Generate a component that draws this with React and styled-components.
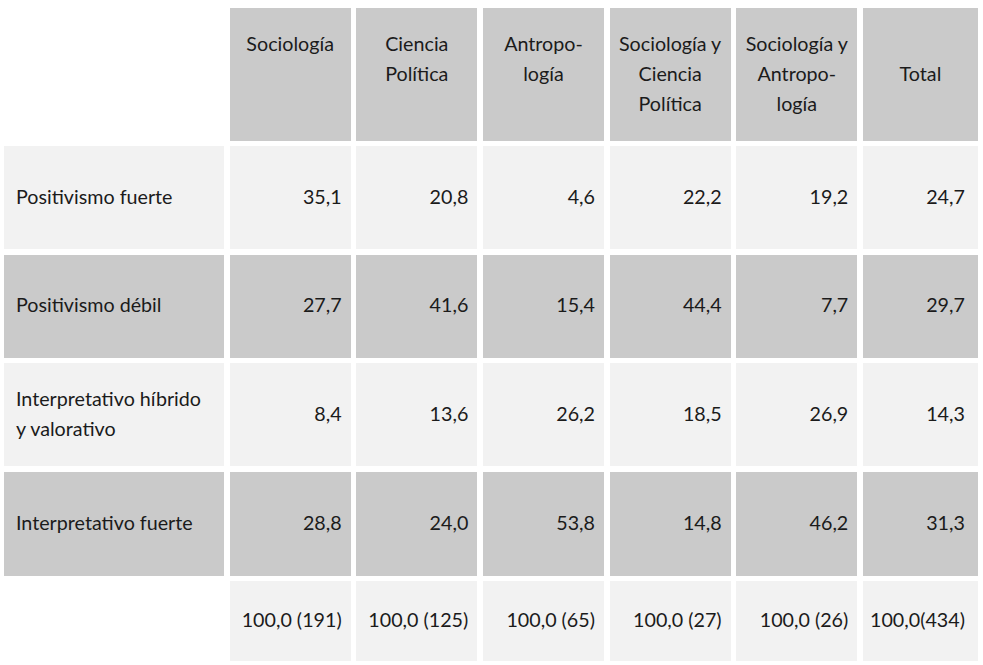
import styled, { createGlobalStyle } from 'styled-components'

const GlobalStyle = createGlobalStyle`
	body {
		margin: 0;
		background: #ffffff;
		font-family: Lato, "Liberation Sans", sans-serif;
		color: #1b1b1b;
	}
`

const tones = {
	dark: '#cacaca',
	light: '#f2f2f2',
	none: 'transparent',
}

const Table = styled.div`
	display: grid;
	grid-template-columns: 220px repeat(5, 121px) 115px;
	grid-template-rows: 133px 103px 103px 103px 104px 80px;
	column-gap: 5.67px;
	row-gap: 5.4px;
	padding: 8px 0 0 4px;
	font-size: 19.7px;
	line-height: 30px;
`

const HeaderCell = styled.div`
	display: flex;
	flex-direction: column;
	align-items: center;
	justify-content: ${({ $middle }) => ($middle ? 'center' : 'flex-start')};
	padding-top: ${({ $middle }) => ($middle ? '0' : '21px')};
	padding-bottom: ${({ $middle }) => ($middle ? '2px' : '0')};
	background: ${({ $tone }) => tones[$tone]};
	text-align: center;
	white-space: nowrap;
`

const LabelCell = styled.div`
	display: flex;
	flex-direction: column;
	justify-content: center;
	padding-left: 12px;
	padding-bottom: 2px;
	background: ${({ $tone }) => tones[$tone]};
	white-space: nowrap;
`

const ValueCell = styled.div`
	display: flex;
	align-items: center;
	justify-content: flex-end;
	padding-right: ${({ $last }) => ($last ? '13px' : '9px')};
	padding-bottom: 2px;
	background: ${({ $tone }) => tones[$tone]};
	white-space: nowrap;
`

const headers = [
	{ lines: ['Sociología'] },
	{ lines: ['Ciencia', 'Política'] },
	{ lines: ['Antropo-', 'logía'] },
	{ lines: ['Sociología y', 'Ciencia', 'Política'] },
	{ lines: ['Sociología y', 'Antropo-', 'logía'] },
	{ lines: ['Total'], middle: true },
]

const rows = [
	{ label: ['Positivismo fuerte'], tone: 'light', values: ['35,1', '20,8', '4,6', '22,2', '19,2', '24,7'] },
	{ label: ['Positivismo débil'], tone: 'dark', values: ['27,7', '41,6', '15,4', '44,4', '7,7', '29,7'] },
	{ label: ['Interpretativo híbrido', 'y valorativo'], tone: 'light', values: ['8,4', '13,6', '26,2', '18,5', '26,9', '14,3'] },
	{ label: ['Interpretativo fuerte'], tone: 'dark', values: ['28,8', '24,0', '53,8', '14,8', '46,2', '31,3'] },
	{ label: [], tone: 'light', blankLabel: true, values: ['100,0 (191)', '100,0 (125)', '100,0 (65)', '100,0 (27)', '100,0 (26)', '100,0(434)'] },
]

export default function App() {
	return (
		<>
			<GlobalStyle />
			<Table>
				<HeaderCell $tone="none" />
				{headers.map((h, i) => (
					<HeaderCell key={i} $tone="dark" $middle={h.middle}>
						{h.lines.map((l) => (
							<span key={l}>{l}</span>
						))}
					</HeaderCell>
				))}
				{rows.map((r, ri) => [
					<LabelCell key={`l${ri}`} $tone={r.blankLabel ? 'none' : r.tone}>
						{r.label.map((l) => (
							<span key={l}>{l}</span>
						))}
					</LabelCell>,
					...r.values.map((v, vi) => (
						<ValueCell key={`v${ri}-${vi}`} $tone={r.tone} $last={vi === r.values.length - 1}>
							{v}
						</ValueCell>
					)),
				])}
			</Table>
		</>
	)
}
